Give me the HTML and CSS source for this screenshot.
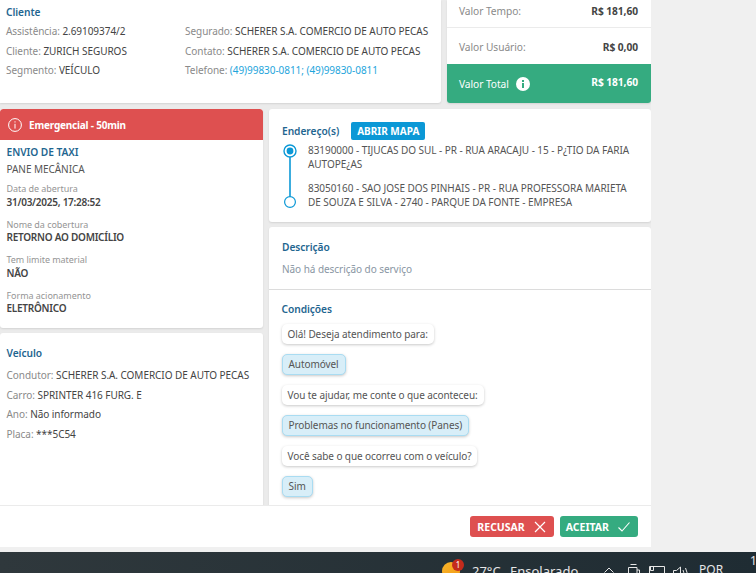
FILE: index.html
```html
<!DOCTYPE html>
<html lang="pt-BR">
<head>
<meta charset="utf-8">
<title>Serviço</title>
<link rel="stylesheet" href="styles.css">
</head>
<body>
<div class="shell">
  <main class="modal">
    <div class="body">
      <section class="row-top">
        <div class="card client">
          <h2 class="title">Cliente</h2>
          <div class="client-grid">
            <div class="col col-a">
              <p class="kv"><span class="k">Assistência:</span> 2.69109374/2</p>
              <p class="kv"><span class="k">Cliente:</span> ZURICH SEGUROS</p>
              <p class="kv"><span class="k">Segmento:</span> VEÍCULO</p>
            </div>
            <div class="col">
              <p class="kv"><span class="k">Segurado:</span> SCHERER S.A. COMERCIO DE AUTO PECAS</p>
              <p class="kv"><span class="k">Contato:</span> SCHERER S.A. COMERCIO DE AUTO PECAS</p>
              <p class="kv"><span class="k">Telefone:</span> <span class="link">(49)99830-0811; (49)99830-0811</span></p>
            </div>
          </div>
        </div>
        <div class="card values">
          <div class="val val-1"><span class="k">Valor Tempo:</span><b>R$ 181,60</b></div>
          <div class="val val-2"><span class="k">Valor Usuário:</span><b>R$ 0,00</b></div>
          <div class="val total">
            <span class="total-l">Valor Total
              <svg class="i-info" viewBox="0 0 14 14" width="14" height="14"><circle cx="7" cy="7" r="7" fill="#fff"/><rect x="6" y="6" width="2" height="5" fill="#35ab80"/><rect x="6" y="3" width="2" height="2" fill="#35ab80"/></svg>
            </span>
            <b>R$ 181,60</b>
          </div>
        </div>
      </section>
      <section class="row-main">
        <div class="left">
          <div class="card service">
            <div class="alert">
              <svg class="i-alert" viewBox="0 0 14 14" width="14" height="14"><circle cx="7" cy="7" r="6.400" fill="none" stroke="#fff" stroke-width="1"/><rect x="6.500" y="3.300" width="1" height="1.200" fill="#fff"/><rect x="6.500" y="5.800" width="1" height="4.800" fill="#fff"/></svg>
              <span>Emergencial - 50min</span>
            </div>
            <div class="service-body">
              <h3 class="title-sm">ENVIO DE TAXI</h3>
              <p class="sub">PANE MECÂNICA</p>
              <div class="field"><span class="f-l">Data de abertura</span><span class="f-v">31/03/2025, 17:28:52</span></div>
              <div class="field"><span class="f-l">Nome da cobertura</span><span class="f-v">RETORNO AO DOMICÍLIO</span></div>
              <div class="field"><span class="f-l">Tem limite material</span><span class="f-v">NÃO</span></div>
              <div class="field"><span class="f-l">Forma acionamento</span><span class="f-v">ELETRÔNICO</span></div>
            </div>
          </div>
          <div class="card vehicle">
            <h2 class="title">Veículo</h2>
            <p class="kv"><span class="k">Condutor:</span> SCHERER S.A. COMERCIO DE AUTO PECAS</p>
            <p class="kv"><span class="k">Carro:</span> SPRINTER 416 FURG. E</p>
            <p class="kv"><span class="k">Ano:</span> Não informado</p>
            <p class="kv"><span class="k">Placa:</span> ***5C54</p>
          </div>
        </div>
        <div class="right">
          <div class="card address">
            <div class="addr-head"><h2 class="title">Endereço(s)</h2><button class="map-btn">ABRIR MAPA</button></div>
            <div class="route">
              <svg class="route-line" viewBox="0 0 14 64" width="14" height="64">
                <line x1="7" y1="13" x2="7" y2="53" stroke="#0b98d6" stroke-width="1.600"/>
                <circle cx="7" cy="7" r="6" fill="#fff" stroke="#0b98d6" stroke-width="1.400"/>
                <circle cx="7" cy="7" r="3.400" fill="#0b98d6"/>
                <circle cx="7" cy="58" r="5.400" fill="#fff" stroke="#0b98d6" stroke-width="1.200"/>
              </svg>
              <div class="stops">
                <p>83190000 - TIJUCAS DO SUL - PR - RUA ARACAJU - 15 - P¿TIO DA FARIA AUTOPE¿AS</p>
                <p>83050160 - SAO JOSE DOS PINHAIS - PR - RUA PROFESSORA MARIETA DE SOUZA E SILVA - 2740 - PARQUE DA FONTE - EMPRESA</p>
              </div>
            </div>
          </div>
          <div class="card detail">
            <div class="desc">
              <h2 class="title">Descrição</h2>
              <p class="muted">Não há descrição do serviço</p>
            </div>
            <div class="cond">
              <h2 class="title">Condições</h2>
              <div class="chat">
                <span class="bubble">Olá! Deseja atendimento para:</span>
                <span class="bubble me">Automóvel</span>
                <span class="bubble">Vou te ajudar, me conte o que aconteceu:</span>
                <span class="bubble me">Problemas no funcionamento (Panes)</span>
                <span class="bubble">Você sabe o que ocorreu com o veículo?</span>
                <span class="bubble me">Sim</span>
              </div>
            </div>
          </div>
        </div>
      </section>
    </div>
    <footer class="actions">
      <button class="btn red">RECUSAR
        <svg viewBox="0 0 12 12" width="12" height="12"><path d="M1 1l10 10M11 1L1 11" stroke="#fff" stroke-width="1.200" fill="none"/></svg>
      </button>
      <button class="btn green">ACEITAR
        <svg viewBox="0 0 12 10" width="12" height="10"><path d="M.5 5.500l3.500 3.500 7.500-8.500" stroke="#fff" stroke-width="1.100" fill="none"/></svg>
      </button>
    </footer>
  </main>
  <div class="taskbar">
    <span class="sun"><span class="badge">1</span></span>
    <span class="weather">27°C</span>
    <span class="weather sky">Ensolarado</span>
    <svg class="tray-i ti-chev" viewBox="0 0 10 6" width="10" height="6"><path d="M.5 5.500l4.500-4.500 4.500 4.500" stroke="#e6e6e6" fill="none"/></svg>
    <svg class="tray-i ti-cam" viewBox="0 0 12 14" width="12" height="14"><path d="M2.500 .5h6M.5 3.500h8.500v9h-8.500zM9 6h2.500v4h-2.500" stroke="#e6e6e6" fill="none"/></svg>
    <svg class="tray-i ti-mon" viewBox="0 0 16 12" width="16" height="12"><path d="M.5 .5h15v9.500h-15zM1.500 .5v4h3v-4" stroke="#e6e6e6" fill="none"/></svg>
    <svg class="tray-i ti-vol" viewBox="0 0 16 12" width="16" height="12"><path d="M.5 4.500h3l4-3.500v11l-4-3.500h-3zM10 4q1.500 2.500 0 5M12.500 2q3 4.500 0 9" stroke="#e6e6e6" fill="none"/></svg>
    <span class="lang">POR</span>
    <span class="clock">1</span>
  </div>
</div>
</body>
</html>
```

FILE: styles.css
```css
* { box-sizing: border-box; }
html, body { margin: 0; height: 100%; overflow: hidden; }
body { background: #f0f0f0; font-family: "Noto Sans", "Open Sans", sans-serif; font-size: 10px; color: #444; letter-spacing: -.05px; }
p, h2, h3 { margin: 0; }
button { font-family: inherit; border: 0; cursor: pointer; }

.shell { height: 573px; display: flex; flex-direction: column; }
.modal { width: 651px; height: 547px; background: #fff; display: flex; flex-direction: column; }
.body { height: 505px; background: #ebebeb; overflow: hidden; display: flex; flex-direction: column; gap: 6px; }
.card { background: #fff; border-radius: 3px; box-shadow: 0 1px 2px rgba(0,0,0,.1); }

.row-top { display: flex; gap: 6px; height: 103px; flex: none; }
.client { width: 441px; padding: 5px 6px 0; border-radius: 0 0 3px 0; }
.title { font-size: 10.200px; font-weight: 600; color: #1f6690; line-height: 14px; }
.client-grid { display: flex; margin-top: 3px; }
.col-a { width: 179px; }
.kv { font-size: 10px; line-height: 19.500px; color: #444; white-space: nowrap; }
.k { color: #8a8a8a; }
.link { color: #1ea5dc; }

.values { width: 204px; border-radius: 0 0 3px 3px; overflow: hidden; display: flex; flex-direction: column; }
.val { display: flex; justify-content: space-between; align-items: center; padding: 0 13px 0 12px; font-size: 10.200px; }
.val b { font-weight: 700; font-size: 10.200px; color: #444; }
.val-1 { height: 28px; border-bottom: 1px solid #ebebeb; padding-bottom: 6px; }
.val-2 { height: 36px; padding-top: 2px; }
.total { flex: 1; background: #35ab80; color: #fff; }
.total b { color: #fff; margin-top: -4px; }
.total-l { display: flex; align-items: center; gap: 7px; }

.row-main { display: flex; gap: 6px; flex: 1; min-height: 0; }
.left { width: 263px; display: flex; flex-direction: column; gap: 5px; flex: none; }
.right { flex: 1; display: flex; flex-direction: column; gap: 5px; min-width: 0; }

.service { height: 219px; overflow: hidden; }
.alert { height: 31px; background: #de5050; color: #fff; display: flex; align-items: center; gap: 7px; padding: 0 8px; font-size: 10px; font-weight: 700; letter-spacing: -.2px; border-radius: 3px 3px 0 0; }
.service-body { padding: 5px 6.500px; }
.title-sm { font-size: 10.200px; font-weight: 600; color: #1f6690; line-height: 14px; }
.sub { font-size: 10px; line-height: 20px; color: #555; margin-bottom: 3px; }
.field { display: flex; flex-direction: column; margin-bottom: 8.500px; }
.f-l { font-size: 9px; line-height: 13.500px; color: #959595; }
.f-v { font-size: 10px; line-height: 13.500px; font-weight: 600; letter-spacing: -.25px; color: #444; }

.vehicle { flex: 1; padding: 13px 6.500px 0; border-radius: 3px 3px 0 0; }
.vehicle .title { margin-bottom: 6px; }

.address { height: 113px; padding: 13px 13px 0; }
.addr-head { display: flex; align-items: center; gap: 12px; height: 18px; }
.map-btn { height: 18px; padding: 0 6px; background: #0b98d6; color: #fff; font-size: 10px; font-weight: 700; border-radius: 2px; }
.route { display: flex; gap: 11px; margin-top: 3px; }
.route-line { flex: none; margin-left: 1px; margin-top: 1px; }
.stops { display: flex; flex-direction: column; gap: 10px; }
.stops p { font-size: 10px; line-height: 14px; color: #555; }

.detail { flex: 1; border-radius: 3px 3px 0 0; min-height: 0; }
.desc { height: 63px; padding: 13px 13px 0; border-bottom: 1px solid #dcdcdc; }
.muted { font-size: 10px; line-height: 16px; margin-top: 7px; color: #8996a3; }
.cond { padding: 12px 12.500px 0; }
.chat { display: flex; flex-direction: column; align-items: flex-start; gap: 10.100px; margin-top: 7.500px; }
.bubble { height: 20px; line-height: 20px; padding: 0 6px; background: #fff; border-radius: 5px; font-size: 10px; letter-spacing: -.08px; color: #555; box-shadow: 0 1px 3px rgba(0,0,0,.22); white-space: nowrap; }
.bubble.me { background: #d8eef8; border: 1px solid #a9dcf2; line-height: 19px; height: 21px; }

.actions { height: 42px; flex: none; border-top: 1px solid #ebebeb; display: flex; justify-content: flex-end; align-items: flex-start; gap: 6px; padding: 10px 13px 0; }
.btn { height: 21px; padding: 0 8px 0 7px; color: #fff; font-size: 10.500px; font-weight: 700; display: flex; align-items: center; gap: 9px; border-radius: 3px; letter-spacing: 0; }
.red { background: #de5050; }
.green { background: #35ab80; padding-left: 6px; }

.taskbar { margin-top: 5px; height: 21px; flex: none; background: linear-gradient(90deg, #2f383c, #1f2c33); color: #e6e6e6; position: relative; overflow: hidden; font-size: 13px; letter-spacing: 0; }
.weather { position: absolute; left: 472px; top: 10px; line-height: 18px; }
.sky { left: 510px; }
.sun { position: absolute; left: 442px; top: 10px; width: 18px; height: 18px; border-radius: 50%; background: linear-gradient(135deg, #f8b42a, #f29a14); }
.badge { position: absolute; right: -4px; top: -3px; width: 12px; height: 12px; border-radius: 50%; background: #c42b1c; color: #fff; font-size: 8px; line-height: 12px; text-align: center; }
.tray-i { position: absolute; }
.ti-chev { left: 604px; top: 15px; }
.ti-cam { left: 628px; top: 12px; }
.ti-mon { left: 649px; top: 14px; }
.ti-vol { left: 673px; top: 14px; }
.lang { position: absolute; left: 699px; top: 11px; font-size: 12px; line-height: 14px; }
.clock { position: absolute; left: 750px; top: 2px; font-size: 12px; line-height: 14px; }
```
